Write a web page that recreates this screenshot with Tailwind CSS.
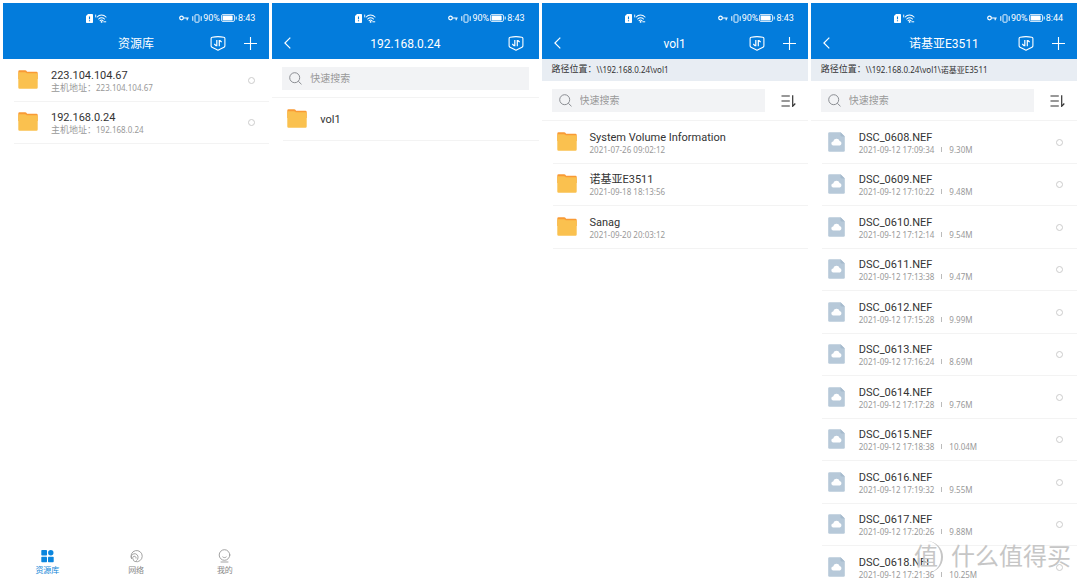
<!DOCTYPE html>
<html lang="zh-CN">
<head>
<meta charset="utf-8">
<meta name="viewport" content="width=device-width, initial-scale=1">
<title>资源库</title>
<script src="https://cdn.jsdelivr.net/npm/@tailwindcss/browser@4"></script>
</head>
<body class="h-screen overflow-hidden bg-white font-['Roboto','Noto_Sans_CJK_SC',sans-serif] text-[#333]">

<svg class="hidden" aria-hidden="true">
  <symbol id="i-sim" viewBox="0 0 7 9"><path d="M2 0h4.2a.8.8 0 0 1 .8.8v7.4a.8.8 0 0 1-.8.8H.8a.8.8 0 0 1-.8-.8V2z" fill="#fff"/><path d="M3.5 2.6v2.6M3.5 6.2v1.1" stroke="#037cdc" stroke-width="1.1"/></symbol>
  <symbol id="i-wifi" viewBox="0 0 12 9"><g fill="none" stroke="#fff" stroke-linecap="round"><path d="M.7 1v2" stroke-width=".9"/><path d="M2.2 3C4.500.4 8.500.4 11 3M3.700 5c1.600-1.700 4.200-1.700 5.800 0M5.100 6.600c.9-.9 2-.9 2.900 0" stroke-width="1.050"/><path d="M8.800 7.800h2" stroke-width="1"/></g><circle cx="6.600" cy="7.900" r=".9" fill="#fff"/></symbol>
  <symbol id="i-key" viewBox="0 0 10 6"><g fill="none" stroke="#fff" stroke-width="1.200"><circle cx="2.500" cy="3" r="1.800"/><path d="M4.300 3h5.400M8.200 3v2.200"/></g></symbol>
  <symbol id="i-vib" viewBox="0 0 10 9"><g fill="none" stroke="#fff"><rect x="3" y=".8" width="4" height="7.400" rx=".5" stroke-width=".9"/><path d="M.8 2.200v4.600M9.200 2.200v4.600" stroke-width="1"/></g></symbol>
  <symbol id="i-bat" viewBox="0 0 16 8"><rect x=".5" y=".5" width="13" height="7" rx="1.500" fill="none" stroke="#fff" stroke-width=".8"/><rect x="1.600" y="1.600" width="10" height="4.800" rx=".4" fill="#fff"/><path d="M15.200 2.500v3" stroke="#fff" stroke-width="1"/></symbol>
  <symbol id="i-shield" viewBox="0 0 16 15"><g fill="none" stroke="#fff"><path d="M2.300 1.200C5 .7 11 .7 13.700 1.200q1.200.2 1.200 1.300v7.300q0 1-.9 1.500C12 12.400 10 13.200 8 14.200 6 13.200 4 12.400 2 11.300q-.9-.5-.9-1.500V2.500q0-1.100 1.200-1.300z" stroke-width="1.100"/><path d="M6.800 4v5.700H6L4.300 8M9.300 10.300V4.500h.7l1.700 1.700" stroke-width="1.200"/></g></symbol>
  <symbol id="i-plus" viewBox="0 0 13 13"><path d="M6.500 0v13M0 6.500h13" stroke="#fff" stroke-width="1.100"/></symbol>
  <symbol id="i-back" viewBox="0 0 7 12"><path d="M6.300.6.900 6l5.400 5.400" fill="none" stroke="#fff" stroke-width="1.200"/></symbol>
  <symbol id="i-search" viewBox="0 0 13 13"><g fill="none" stroke="#8b8e93" stroke-width="1"><circle cx="5.700" cy="5.700" r="5"/><path d="m9.300 9.300 3.200 3"/></g></symbol>
  <symbol id="i-sort" viewBox="0 0 15 12"><g fill="none" stroke="#333" stroke-width="1.200"><path d="M.5 1h8.300M.5 6h8.300M.5 11h8.300M11.700.300v11l2.600-2.800"/></g></symbol>
  <symbol id="i-folder" viewBox="0 0 20 19"><path d="M1.500.3h5.800q.7 0 1.100.5l.7.9h9.400q1.200 0 1.200 1.200V9H.3V1.500Q.3.3 1.500.3z" fill="#f99a35"/><path d="M.3 3.200q0-1 1-1h5.800q.7 0 1.200.6l.5.500h9.700q1.200 0 1.200 1.200v13q0 1.200-1.200 1.200h-17Q.3 18.700.3 17.500z" fill="#fac14f"/></symbol>
  <symbol id="i-file" viewBox="0 0 17 20"><path d="M1.500.3h11l4.300 4.300v13.900q0 1.200-1.200 1.200H1.500Q.2 19.700.2 18.500v-17Q.2.3 1.500.3z" fill="#b7c9d9"/><path d="M12.500.3v3.200q0 1.100 1.100 1.100h3.200z" fill="#a6bbcd"/><path d="M5.500 13.400a2 2 0 0 1-.3-4 3.300 3.300 0 0 1 6.400-.4 2.300 2.300 0 0 1 .4 4.400z" fill="#fff"/></symbol>
  <symbol id="i-grid" viewBox="0 0 13 13"><g fill="#0a86de"><rect x=".3" y=".5" width="5.700" height="5.500" rx=".7"/><circle cx="9.800" cy="3.200" r="2.700"/><rect x=".3" y="7.200" width="5.700" height="5.500" rx=".7"/><rect x="7" y="7.200" width="5.700" height="5.500" rx=".7"/></g></symbol>
  <symbol id="i-net" viewBox="0 0 13 13"><g fill="none" stroke="#999" stroke-width=".9"><path d="M1.700 9.300A5.600 5.600 0 1 1 5 12"/><path d="M1.700 9.300A3.400 3.400 0 1 1 8 8.200q0 2-1.700 2.900M5 12q-2-.6-1.900-2.400A1.700 1.700 0 1 1 6 9"/></g></symbol>
  <symbol id="i-me" viewBox="0 0 13 14"><g fill="none" stroke="#999" stroke-width=".9" stroke-linecap="round"><circle cx="6.500" cy="6" r="5.300"/><path d="M4.800 8c1 .9 2.400.9 3.400 0M3 13h7"/></g></symbol>
</svg>

<div class="grid h-full grid-cols-4 gap-x-[3px] px-[3px] pt-[3px]">

  <section class="flex min-w-0 flex-col overflow-hidden">
    <header class="bg-[#037cdc] text-white">
      <div data-status="8:43"></div>
      <div class="grid h-[30px] grid-cols-[1fr_auto_1fr] items-center px-3 pb-0.5">
        <span></span>
        <h1 class="pt-px text-xs">资源库</h1>
        <div class="flex items-center justify-end gap-[18px]">
          <button aria-label="传输"><svg class="block h-[15px] w-4"><use href="#i-shield"/></svg></button>
          <button aria-label="添加"><svg class="block size-[13px]"><use href="#i-plus"/></svg></button>
        </div>
      </div>
    </header>
    <ul class="ml-[11px] grow" data-rows="hosts"></ul>
    <nav class="grid grid-cols-3 pb-[6px] text-[8px] leading-3 text-[#888]">
      <a href="#lib" class="flex flex-col items-center gap-0.5 text-[#1187d8]"><svg class="h-[14px] w-[13px]"><use href="#i-grid"/></svg>资源库</a>
      <a href="#net" class="flex flex-col items-center gap-0.5"><svg class="h-[14px] w-[13px]"><use href="#i-net"/></svg>网络</a>
      <a href="#me" class="flex flex-col items-center gap-0.5"><svg class="h-[14px] w-[13px]"><use href="#i-me"/></svg>我的</a>
    </nav>
  </section>

  <section class="flex min-w-0 flex-col overflow-hidden">
    <header class="bg-[#037cdc] text-white">
      <div data-status="8:43"></div>
      <div class="grid h-[30px] grid-cols-[1fr_auto_1fr] items-center px-3 pb-0.5">
        <button aria-label="返回"><svg class="block h-3 w-[7px]"><use href="#i-back"/></svg></button>
        <h1 class="pt-px text-xs">192.168.0.24</h1>
        <div class="flex items-center justify-end pr-[3px]">
          <button aria-label="传输"><svg class="block h-[15px] w-4"><use href="#i-shield"/></svg></button>
        </div>
      </div>
    </header>
    <div class="border-b border-[#f3f3f3] px-[10px] pt-2 pb-[7px]">
      <label class="flex h-[23px] items-center gap-2 bg-[#f2f3f5] px-[7px]">
        <svg class="size-[13px] shrink-0"><use href="#i-search"/></svg>
        <input type="search" aria-label="快速搜索" placeholder="快速搜索" class="w-full min-w-0 bg-transparent text-[10px] outline-none placeholder:text-[#999]">
      </label>
    </div>
    <ul class="ml-[11px]" data-rows="shares"></ul>
  </section>

  <section class="flex min-w-0 flex-col overflow-hidden">
    <header class="bg-[#037cdc] text-white">
      <div data-status="8:43"></div>
      <div class="grid h-[30px] grid-cols-[1fr_auto_1fr] items-center px-3 pb-0.5">
        <button aria-label="返回"><svg class="block h-3 w-[7px]"><use href="#i-back"/></svg></button>
        <h1 class="pt-px text-xs">vol1</h1>
        <div class="flex items-center justify-end gap-[18px]">
          <button aria-label="传输"><svg class="block h-[15px] w-4"><use href="#i-shield"/></svg></button>
          <button aria-label="添加"><svg class="block size-[13px]"><use href="#i-plus"/></svg></button>
        </div>
      </div>
    </header>
    <p class="flex h-[22px] shrink-0 items-center bg-[#e8edf3] px-[10px] text-[9px] whitespace-nowrap"><span>路径位置：</span><span class="font-['Noto_Sans','Noto_Sans_CJK_SC',sans-serif] text-[8px]">\\192.168.0.24\vol1</span></p>
    <div class="flex items-center gap-4 border-b border-[#f3f3f3] py-2 pr-3 pl-[10px]">
      <label class="flex h-[23px] grow items-center gap-2 bg-[#f2f3f5] px-[7px]">
        <svg class="size-[13px] shrink-0"><use href="#i-search"/></svg>
        <input type="search" aria-label="快速搜索" placeholder="快速搜索" class="w-full min-w-0 bg-transparent text-[10px] outline-none placeholder:text-[#999]">
      </label>
      <button aria-label="排序"><svg class="block h-3 w-[15px]"><use href="#i-sort"/></svg></button>
    </div>
    <ul class="ml-[11px]" data-rows="folders"></ul>
  </section>

  <section class="relative flex min-w-0 flex-col overflow-hidden">
    <header class="bg-[#037cdc] text-white">
      <div data-status="8:44"></div>
      <div class="grid h-[30px] grid-cols-[1fr_auto_1fr] items-center px-3 pb-0.5">
        <button aria-label="返回"><svg class="block h-3 w-[7px]"><use href="#i-back"/></svg></button>
        <h1 class="pt-px text-xs">诺基亚E3511</h1>
        <div class="flex items-center justify-end gap-[18px]">
          <button aria-label="传输"><svg class="block h-[15px] w-4"><use href="#i-shield"/></svg></button>
          <button aria-label="添加"><svg class="block size-[13px]"><use href="#i-plus"/></svg></button>
        </div>
      </div>
    </header>
    <p class="flex h-[22px] shrink-0 items-center bg-[#e8edf3] px-[10px] text-[9px] whitespace-nowrap"><span>路径位置：</span><span class="font-['Noto_Sans','Noto_Sans_CJK_SC',sans-serif] text-[8px]">\\192.168.0.24\vol1\诺基亚E3511</span></p>
    <div class="flex items-center gap-4 border-b border-[#f3f3f3] py-2 pr-3 pl-[10px]">
      <label class="flex h-[23px] grow items-center gap-2 bg-[#f2f3f5] px-[7px]">
        <svg class="size-[13px] shrink-0"><use href="#i-search"/></svg>
        <input type="search" aria-label="快速搜索" placeholder="快速搜索" class="w-full min-w-0 bg-transparent text-[10px] outline-none placeholder:text-[#999]">
      </label>
      <button aria-label="排序"><svg class="block h-3 w-[15px]"><use href="#i-sort"/></svg></button>
    </div>
    <ul class="ml-[11px]" data-rows="files"></ul>

    <div class="pointer-events-none absolute right-[6px] bottom-2 flex items-center gap-2 text-2xl leading-9 text-[#c6c6c6]">
      <span class="flex size-8 items-center justify-center rounded-full border-r-2 border-[#c6c6c6]">值</span>
      <span>什么值得买</span>
    </div>
  </section>
</div>

<script>
const statusBar = time => `
  <div class="grid h-[26px] grid-cols-[1fr_auto] items-center pt-1 pr-[14px] pl-[83px] text-[9px] leading-3">
    <div class="flex items-center gap-[2px]">
      <svg class="h-[9px] w-[7px]"><use href="#i-sim"/></svg>
      <svg class="h-[9px] w-3"><use href="#i-wifi"/></svg>
    </div>
    <div class="flex items-center">
      <svg class="mr-[3px] h-[6px] w-[10px]"><use href="#i-key"/></svg>
      <svg class="h-[9px] w-[10px]"><use href="#i-vib"/></svg>
      <span class="mx-px">90%</span>
      <svg class="mr-px h-2 w-4"><use href="#i-bat"/></svg>
      <span>${time}</span>
    </div>
  </div>`;

const row = ({ icon = 'folder', name, label, meta, size, pick }) => `
  <li class="flex h-[42px] items-center border-b border-[#f3f3f3] pr-[14px] odd:h-[43px]">
    ${icon === 'file'
      ? '<svg class="mr-[14px] mb-px ml-[6px] h-5 w-[17px] shrink-0"><use href="#i-file"/></svg>'
      : '<svg class="mr-[13px] mb-0.5 ml-1 h-[19px] w-5 shrink-0"><use href="#i-folder"/></svg>'}
    <div class="min-w-0 grow pt-px whitespace-nowrap">
      <div class="text-[11px] leading-[13px]">${name}</div>
      ${meta ? `<div class="flex items-center font-['Noto_Sans','Noto_Sans_CJK_SC',sans-serif] text-[8px] leading-[11px] text-[#999]">
        ${label ? `<span class="text-[9px]">${label}</span>` : ''}<span>${meta}</span>
        ${size ? `<span class="mx-[7px] h-[5px] w-px bg-[#bbb]"></span><span>${size}</span>` : ''}
      </div>` : ''}
    </div>
    ${pick ? `<input type="radio" name="${pick}" aria-label="${name}" class="size-[7px] shrink-0 appearance-none rounded-full border border-[#ccc]">` : ''}
  </li>`;

const lists = {
  hosts: [
    { name: '223.104.104.67', label: '主机地址：', meta: '223.104.104.67', pick: 'host' },
    { name: '192.168.0.24', label: '主机地址：', meta: '192.168.0.24', pick: 'host' },
  ],
  shares: [{ name: 'vol1' }],
  folders: [
    { name: 'System Volume Information', meta: '2021-07-26 09:02:12' },
    { name: '诺基亚E3511', meta: '2021-09-18 18:13:56' },
    { name: 'Sanag', meta: '2021-09-20 20:03:12' },
  ],
  files: [
    ['0608', '17:09:34', '9.30M'], ['0609', '17:10:22', '9.48M'], ['0610', '17:12:14', '9.54M'],
    ['0611', '17:13:38', '9.47M'], ['0612', '17:15:28', '9.99M'], ['0613', '17:16:24', '8.69M'],
    ['0614', '17:17:28', '9.76M'], ['0615', '17:18:38', '10.04M'], ['0616', '17:19:32', '9.55M'],
    ['0617', '17:20:26', '9.88M'], ['0618', '17:21:36', '10.25M'],
  ].map(([n, t, size]) => ({ icon: 'file', name: `DSC_${n}.NEF`, meta: `2021-09-12 ${t}`, size, pick: 'file' })),
};

document.querySelectorAll('[data-status]').forEach(el => { el.innerHTML = statusBar(el.dataset.status); });
document.querySelectorAll('[data-rows]').forEach(el => { el.innerHTML = lists[el.dataset.rows].map(row).join(''); });
</script>
</body>
</html>
